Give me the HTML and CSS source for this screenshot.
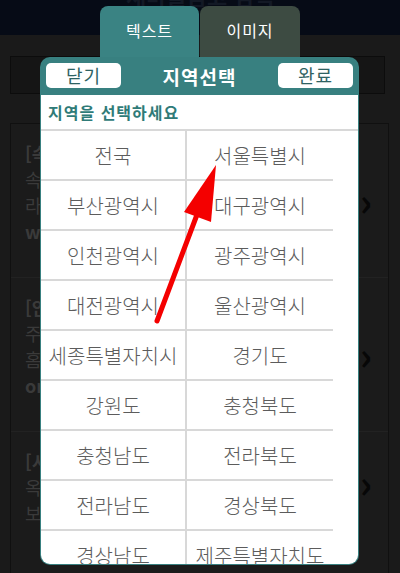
FILE: index.html
```html
<!DOCTYPE html>
<html lang="ko">
<head>
    <meta charset="utf-8">
    <title>지역선택</title>
    <link rel="stylesheet" href="styles.css">
</head>
<body>
<div class="page">
    <div class="top-bar"><span class="top-title">새마을금고 검색</span></div>
    <div class="search-box"></div>
    <div class="news-list">
        <div class="news-item">
            <p class="news-head">[속보] 지역 소식 안내</p>
            <p>속보 내용이 표시됩니다</p>
            <p>라디오 방송 안내</p>
            <p class="news-link">www.example.co.kr</p>
            <span class="chevron">&#x203A;</span>
        </div>
        <div class="news-item">
            <p class="news-head">[안내] 지역 행사 소식</p>
            <p>주말 행사 일정 안내</p>
            <p>홈페이지 참고 바랍니다</p>
            <p class="news-link">or.kr</p>
            <span class="chevron">&#x203A;</span>
        </div>
        <div class="news-item short">
            <p class="news-head">[시정] 새 소식 알림</p>
            <p>옥외 광고 안내</p>
            <p>보도 자료 참고</p>
            <span class="chevron">&#x203A;</span>
        </div>
    </div>
</div>

<div class="modal">
    <div class="modal-tabs">
        <div class="modal-tab active">텍스트</div>
        <div class="modal-tab">이미지</div>
    </div>
    <div class="modal-panel">
        <div class="modal-header">
            <button class="modal-btn">닫기</button>
            <h2 class="modal-title">지역선택</h2>
            <button class="modal-btn">완료</button>
        </div>
        <div class="modal-body">
            <p class="modal-hint">지역을 선택하세요</p>
            <div class="region-grid">
                <div class="region">전국</div>
                <div class="region">서울특별시</div>
                <div class="region">부산광역시</div>
                <div class="region">대구광역시</div>
                <div class="region">인천광역시</div>
                <div class="region">광주광역시</div>
                <div class="region">대전광역시</div>
                <div class="region">울산광역시</div>
                <div class="region">세종특별자치시</div>
                <div class="region">경기도</div>
                <div class="region">강원도</div>
                <div class="region">충청북도</div>
                <div class="region">충청남도</div>
                <div class="region">전라북도</div>
                <div class="region">전라남도</div>
                <div class="region">경상북도</div>
                <div class="region">경상남도</div>
                <div class="region">제주특별자치도</div>
            </div>
        </div>
    </div>
</div>

<svg class="pointer" width="400" height="573" viewBox="0 0 400 573">
    <line x1="198" y1="212" x2="157" y2="321" stroke="#f40000" stroke-width="5" stroke-linecap="round"/>
    <polygon points="216,165 184,212 211,222" fill="#f40000"/>
</svg>
</body>
</html>
```

FILE: styles.css
```css
body {
    margin: 0;
    width: 400px;
    height: 573px;
    overflow: hidden;
    position: relative;
    background-color: #1a1a1a;
    font-family: "Noto Sans CJK KR", "Noto Sans", sans-serif;
}
.page {
    height: 100%;
}
.top-bar {
    height: 35px;
    background-color: #060b16;
    overflow: hidden;
    text-align: center;
}
.top-title {
    display: block;
    margin-top: -21px;
    font-size: 22px;
    font-weight: bold;
    color: #131925;
}
.search-box {
    height: 36px;
    margin: 21px 15px 0 10px;
    background-color: #151515;
    border: 1px solid #0c0c0c;
}
.news-list {
    margin: 29px 11px 0 10px;
    border: 1px solid #101010;
    background-color: #1b1b1b;
}
.news-item {
    position: relative;
    height: 154px;
    padding: 16px 14px 0;
    box-sizing: border-box;
    border-bottom: 1px solid #222;
}
.news-item p {
    margin: 0;
    font-size: 18px;
    line-height: 26px;
    color: #3a3a3a;
    white-space: nowrap;
}
.news-item .news-head,
.news-item .news-link {
    font-weight: bold;
}
.chevron {
    position: absolute;
    right: 16px;
    top: 48px;
    font-size: 38px;
    font-weight: bold;
    color: #070707;
}
.news-item.short .chevron {
    top: 22px;
}
.modal {
    position: absolute;
    left: 40px;
    top: 6px;
    width: 319px;
}
.modal-tabs {
    display: flex;
    margin-left: 60px;
}
.modal-tab {
    width: 100px;
    height: 51px;
    padding-top: 12px;
    box-sizing: border-box;
    border-radius: 8px 8px 0 0;
    background-color: #3d4b42;
    color: #fff;
    font-size: 16px;
    letter-spacing: 1px;
    text-align: center;
}
.modal-tab.active {
    width: 99px;
    margin-right: 1px;
    background-color: #3a8383;
}
.modal-panel {
    height: 508px;
    background-color: #388080;
    border-radius: 10px;
    display: flex;
    flex-direction: column;
}
.modal-header {
    height: 38px;
    display: flex;
    align-items: center;
    justify-content: space-between;
    padding: 0 6px;
}
.modal-btn {
    width: 75px;
    height: 25px;
    margin-top: -1px;
    padding: 0;
    border: none;
    border-radius: 5px;
    background-color: #fff;
    color: #2e6262;
    font-family: inherit;
    font-size: 18px;
    line-height: 25px;
    letter-spacing: 1px;
}
.modal-title {
    margin: 0;
    font-size: 19px;
    font-weight: bold;
    letter-spacing: 1px;
    color: #fff;
}
.modal-body {
    flex: 1;
    margin: 0 1px 1px;
    background-color: #fff;
    border-radius: 0 0 9px 9px;
    overflow: hidden;
}
.modal-hint {
    margin: 0;
    height: 36px;
    padding-left: 7px;
    box-sizing: border-box;
    line-height: 34px;
    border-bottom: 2px solid #d8d8d8;
    font-size: 16px;
    font-weight: bold;
    letter-spacing: 1px;
    color: #2f7b78;
}
.region-grid {
    display: grid;
    grid-template-columns: 146px 146px;
    grid-auto-rows: 50px;
}
.region {
    display: flex;
    align-items: center;
    justify-content: center;
    border-bottom: 2px solid #d8d8d8;
    font-size: 20px;
    font-weight: 300;
    color: #5c5c5c;
}
.region:nth-child(odd) {
    border-right: 2px solid #d8d8d8;
}
.pointer {
    position: absolute;
    left: 0;
    top: 0;
    pointer-events: none;
}
```
